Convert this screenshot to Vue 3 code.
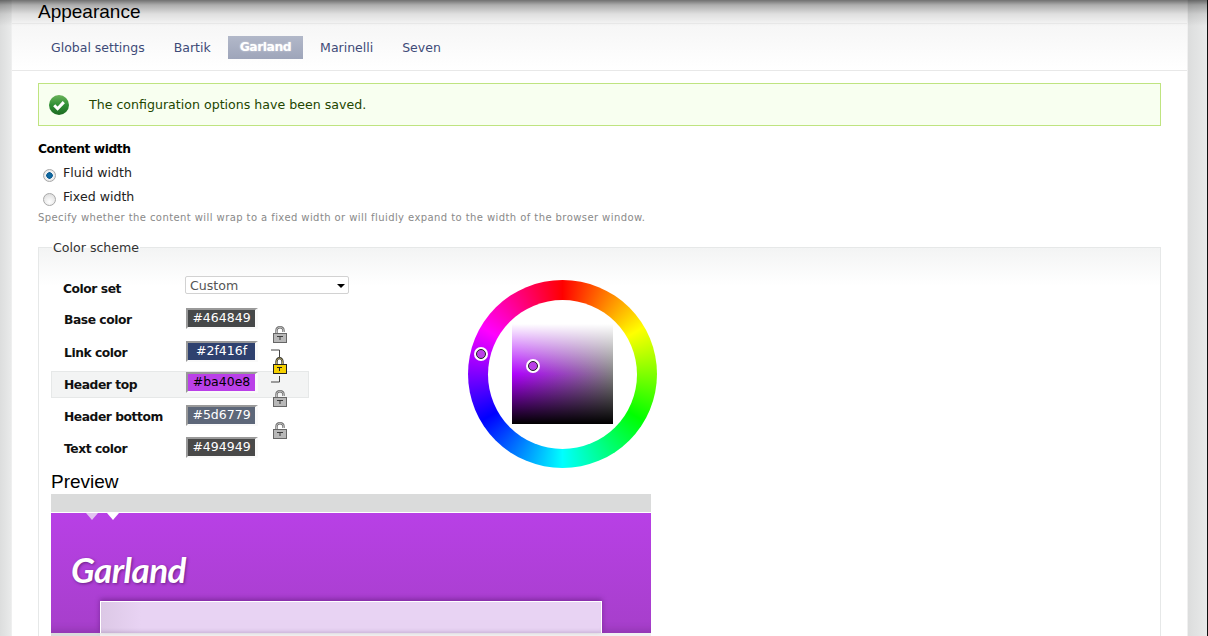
<template>
  <div class="admin">
    <div class="top-shade"></div>
    <div class="page">
      <h1 class="title">Appearance</h1>
      <nav class="tabs">
        <a v-for="tab in tabs" :key="tab" class="tab" :class="{ active: tab === 'Garland' }">{{ tab }}</a>
      </nav>
      <main class="main">
        <div class="message">
          <svg class="ok" width="22" height="22" viewBox="0 0 22 22">
            <defs>
              <linearGradient id="okfill" x1="0" y1="0" x2="0" y2="1">
                <stop offset="0" stop-color="#6bb35a" />
                <stop offset="0.5" stop-color="#2f8f35" />
                <stop offset="1" stop-color="#1d6a22" />
              </linearGradient>
            </defs>
            <circle cx="11" cy="11" r="10" fill="url(#okfill)" />
            <path d="M6.2 11.2l3.4 3.5 6.2-6.6" fill="none" stroke="#fff" stroke-width="3" />
          </svg>
          <span>The configuration options have been saved.</span>
        </div>

        <div class="heading">Content width</div>
        <label class="radio"><span class="dot checked"></span>Fluid width</label>
        <label class="radio"><span class="dot"></span>Fixed width</label>
        <p class="desc">Specify whether the content will wrap to a fixed width or will fluidly expand to the width of the browser window.</p>

        <fieldset class="scheme">
          <legend>Color scheme</legend>
          <div class="scheme-top">
            <div class="form">
              <div class="row">
                <span class="label set-label">Color set</span>
                <div class="select">
                  <span>Custom</span>
                  <i class="caret"></i>
                </div>
              </div>
              <div
                v-for="item in colors"
                :key="item.label"
                class="row"
                :class="{ focused: item.focused }"
              >
                <span class="label">{{ item.label }}</span>
                <span class="swatch" :style="{ background: item.value, color: item.text }">{{ item.value }}</span>
              </div>

              <svg
                v-for="top in openLocks"
                :key="top"
                class="lock"
                :style="{ top: top + 'px' }"
                width="14"
                height="17"
                viewBox="0 0 14 17"
              >
                <path d="M3.500 8V4.500C3.500 2.500 5 1.200 7 1.200s3.500 1.300 3.500 3.300V6" fill="none" stroke="#6e6e6e" stroke-width="2.400" />
                <path d="M3.500 8V4.500C3.500 2.500 5 1.200 7 1.200s3.500 1.300 3.500 3.300V6" fill="none" stroke="#d8d8d8" stroke-width="0.800" />
                <rect x="0.500" y="7.500" width="13" height="9" fill="#b8b8b8" stroke="#666" />
                <path d="M4 10.500h6M7 10.500v3.500" fill="none" stroke="#3c3c3c" />
              </svg>
              <svg class="linked" width="17" height="34" viewBox="0 0 17 34">
                <path d="M0 1h8.500v7M0 33h8.500v-6" fill="none" stroke="#444" />
                <path d="M5.500 15v-2.500C5.500 10.500 7 9.200 8.500 9.200s3 1.300 3 3.300V15" fill="none" stroke="#222" stroke-width="2.200" />
                <path d="M5.500 15v-2.500C5.500 10.500 7 9.200 8.500 9.200s3 1.300 3 3.300V15" fill="none" stroke="#f6e27a" stroke-width="0.700" />
                <rect x="2.500" y="15.500" width="13" height="9" fill="#f5d000" stroke="#222" />
                <path d="M6 18.500h5M8.500 18.500v3.500" fill="none" stroke="#222" />
              </svg>
            </div>

            <div class="wheel">
              <div class="hole">
                <div class="square"></div>
              </div>
              <span class="marker hue-marker"></span>
              <span class="marker sv-marker"></span>
            </div>
          </div>

          <h2 class="preview-title">Preview</h2>
          <div class="preview">
            <div class="preview-bar"></div>
            <div class="preview-head">
              <div class="pointers">
                <i class="pointer dim"></i>
                <i class="pointer"></i>
              </div>
              <div class="logo">Garland</div>
              <div class="card"></div>
            </div>
            <div class="preview-foot"><i></i></div>
          </div>
        </fieldset>
      </main>
    </div>
    <div class="edge"></div>
  </div>
</template>

<script setup>
const tabs = ['Global settings', 'Bartik', 'Garland', 'Marinelli', 'Seven']

const colors = [
  { label: 'Base color', value: '#464849', text: '#fff' },
  { label: 'Link color', value: '#2f416f', text: '#fff' },
  { label: 'Header top', value: '#ba40e8', text: '#000', focused: true },
  { label: 'Header bottom', value: '#5d6779', text: '#fff' },
  { label: 'Text color', value: '#494949', text: '#fff' },
]

const openLocks = [51, 115, 147]
</script>

<style scoped>
.admin {
  position: relative;
  display: flex;
  width: 1208px;
  height: 636px;
  overflow: hidden;
  padding-left: 12px;
  box-sizing: border-box;
  background: linear-gradient(to right, #dcdddd, #e9eaea 11px, #f4f4f4 12px);
  font-family: "DejaVu Sans", Verdana, sans-serif;
  font-size: 12.600px;
  color: #222;
}

.top-shade {
  position: absolute;
  inset: 0 0 auto;
  height: 26px;
  background: linear-gradient(to bottom, rgba(0, 0, 0, 0.55), rgba(0, 0, 0, 0.3) 5px, rgba(0, 0, 0, 0.1) 14px, rgba(0, 0, 0, 0));
  pointer-events: none;
}

.page {
  flex: none;
  width: 1175px;
  height: 636px;
  background: #fff;
}

.edge {
  flex: none;
  width: 21px;
  border-left: 1px solid #f0f0f0;
  border-right: 1px solid #101010;
  box-sizing: border-box;
  background: linear-gradient(to right, #dcdddd, #e9eaea);
}

.title {
  height: 23px;
  margin: 0;
  padding-left: 26px;
  border-bottom: 1px solid #ececec;
  background: #f8f8f8;
  font: 400 19px/23px "Liberation Sans", Arial, sans-serif;
  color: #000;
}

.tabs {
  display: flex;
  gap: 5px;
  height: 47px;
  box-sizing: border-box;
  padding: 12px 0 0 27px;
  border-bottom: 1px solid #e8e8e8;
  background: linear-gradient(to bottom, #f6f6f6, #fff);
}

.tab {
  height: 23px;
  padding: 0 12px;
  font-size: 12.500px;
  line-height: 23px;
  color: #3e4b78;
}

.tab.active {
  background: linear-gradient(to bottom, #b2b8c9, #9ea5ba);
  color: #fff;
  font-size: 12.300px;
  font-weight: 700;
  letter-spacing: -0.450px;
  text-shadow: 0 0 2px rgba(255, 255, 255, 0.6);
}

.main {
  padding: 12px 26px 0;
}

.message {
  display: flex;
  align-items: center;
  gap: 19px;
  height: 43px;
  box-sizing: border-box;
  padding-left: 9px;
  border: 1px solid #bfe480;
  background: #f8fff0;
  color: #234600;
}

.ok {
  flex: none;
}

.heading {
  margin-top: 14px;
  font-size: 12.300px;
  font-weight: 700;
  letter-spacing: -0.450px;
  line-height: 18px;
  color: #000;
}

.radio {
  display: flex;
  align-items: center;
  gap: 7px;
  height: 24px;
  padding-left: 5px;
  color: #222;
}

.heading + .radio {
  margin-top: 2px;
}

.dot {
  width: 11px;
  height: 11px;
  margin-top: 6px;
  border: 1px solid #a8a8a8;
  border-radius: 50%;
  background: radial-gradient(circle at 50% 70%, #fff, #d8d8d8);
}

.dot.checked {
  background: radial-gradient(circle, #0f6fa8 0, #0f5f95 3px, #f4f4f4 3.500px, #d8d8d8);
}

.desc {
  margin: 3px 0 0;
  font-size: 10px;
  line-height: 14px;
  letter-spacing: 0.420px;
  color: #898989;
}

.scheme {
  margin: 13px 0 0;
  padding: 0 12px;
  min-width: 0;
  height: 500px;
  border: 1px solid #e6e8e8;
  background: linear-gradient(to bottom, #f3f4f4, #fff 38px);
}

.scheme legend {
  margin-left: 1px;
  padding: 2px 1px 0;
  line-height: 16px;
  color: #333;
}

.scheme-top {
  display: flex;
  gap: 159px;
  padding-top: 19px;
}

.form {
  position: relative;
  width: 258px;
}

.row {
  display: flex;
  align-items: flex-start;
  height: 27px;
  box-sizing: border-box;
  margin-bottom: 5.250px;
  padding-left: 12px;
  border: 1px solid transparent;
}

.row.focused {
  margin-top: -1px;
  margin-bottom: 6.250px;
  border-color: #e6e8e8;
  background: #f3f4f4;
}

.label {
  flex: none;
  width: 122px;
  font-size: 12.300px;
  font-weight: 700;
  letter-spacing: -0.450px;
  line-height: 25.500px;
  color: #111;
}

.row.focused .label {
  line-height: 26px;
}

.row.focused .swatch {
  margin-top: 0;
}

.set-label {
  margin-top: 1px;
  margin-left: -1px;
  line-height: 25px;
}

.select {
  display: flex;
  align-items: center;
  justify-content: space-between;
  flex: none;
  width: 164px;
  height: 18px;
  box-sizing: border-box;
  padding: 0 3px 0 4px;
  border: 1px solid #d2d2d2;
  border-radius: 2px;
  background: #fff;
  color: #555;
}

.caret {
  width: 0;
  height: 0;
  margin-top: 2px;
  border: 4px solid transparent;
  border-top: 4px solid #000;
  border-bottom: 0;
}

.swatch {
  flex: none;
  width: 72px;
  height: 21px;
  box-sizing: border-box;
  border-style: solid;
  border-width: 2px 3px 2px 2px;
  border-color: #999 #fafafa #fafafa #999;
  font-size: 12.500px;
  line-height: 16px;
  text-align: center;
}

.lock {
  position: absolute;
  left: 222px;
}

.linked {
  position: absolute;
  top: 74px;
  left: 220px;
}

.wheel {
  position: relative;
  display: flex;
  align-items: center;
  justify-content: center;
  flex: none;
  width: 189px;
  height: 188px;
  margin-top: 5px;
  border-radius: 50%;
  background: conic-gradient(#f00, #ff0, #0f0, #0ff, #00f, #f0f, #f00);
}

.hole {
  display: flex;
  align-items: center;
  justify-content: center;
  width: 149px;
  height: 149px;
  border-radius: 50%;
  background: #fff;
}

.square {
  width: 101px;
  height: 100px;
  background:
    linear-gradient(to bottom, #fff, rgba(255, 255, 255, 0) 50%, rgba(0, 0, 0, 0) 50%, #000),
    linear-gradient(to right, #b000ff, #808080);
}

.marker {
  position: absolute;
  width: 8px;
  height: 8px;
  border: 1.500px solid #222;
  border-radius: 50%;
  box-shadow: 0 0 0 2px #fff;
  background: #ba40e8;
}

.hue-marker {
  left: 7.500px;
  top: 68.500px;
}

.sv-marker {
  left: 60px;
  top: 80.500px;
}

.preview-title {
  margin: 2px 0 1px;
  font: 400 19px/22px "Liberation Sans", Arial, sans-serif;
  color: #000;
}

.preview {
  width: 600px;
}

.preview-bar {
  height: 18px;
  background: #dadbdb;
}

.preview-head {
  display: flex;
  flex-direction: column;
  height: 121px;
  box-sizing: border-box;
  border-top: 1px solid #fff;
  background: linear-gradient(to bottom, #b840e6, #a63fca);
  box-shadow: inset 0 -10px 8px -8px rgba(60, 20, 80, 0.25);
}

.pointers {
  display: flex;
  gap: 9px;
  height: 7px;
  margin-left: 35px;
}

.pointer {
  width: 0;
  height: 0;
  border-style: solid;
  border-width: 7px 6.500px 0;
  border-color: #fff transparent transparent;
}

.pointer.dim {
  border-top-color: #e2c2ef;
}

.logo {
  margin: 28px 0 0 20px;
  font: italic 700 35px/42px Lato, "Open Sans", sans-serif;
  letter-spacing: -0.500px;
  color: #fff;
  text-shadow: 1px 1px 3px rgba(60, 10, 80, 0.6);
}

.card {
  flex: 1;
  width: 500px;
  margin: 11px 0 0 49px;
  border-top: 1px solid #fff;
  border-left: 1px solid #fff;
  border-right: 1px solid #fff;
  background: linear-gradient(to right, #dcc8e6, #e8d3f3 40px);
  box-shadow: 0 -2px 5px rgba(60, 10, 80, 0.4), inset 0 -4px 4px -3px rgba(60, 20, 80, 0.2);
}

.preview-foot {
  height: 20px;
  background: #f1f1f1;
}

.preview-foot i {
  display: block;
  width: 49px;
  height: 20px;
  background: #dadbdb;
}
</style>

<style>
html,
body {
  overflow: hidden;
}
</style>
